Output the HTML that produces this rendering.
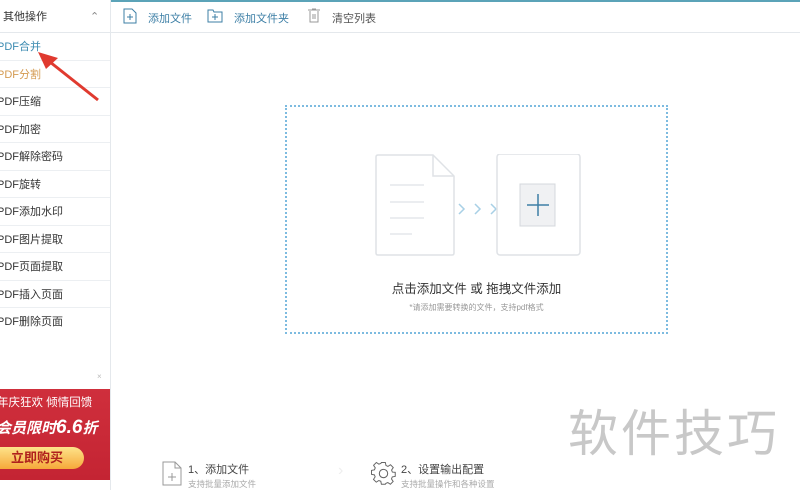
<!DOCTYPE html>
<html><head><meta charset="utf-8"><style>
*{margin:0;padding:0;box-sizing:border-box}
body{width:800px;height:490px;overflow:hidden;background:#fff;font-family:"Liberation Sans","Noto Sans CJK SC",sans-serif;position:relative;color:#333}
.side{position:absolute;left:0;top:0;width:111px;height:490px;border-right:1px solid #e4e8ec;background:#fff}
.hd{height:33px;border-bottom:1px solid #e4e8ec;font-size:11px;line-height:35px;padding-left:0;color:#333}
.item{height:27.5px;border-bottom:1px solid #eceff2;font-size:11px;line-height:29px;color:#333;margin-left:-3px}
.top{position:absolute;left:111px;top:0;right:0;height:33px;border-bottom:1px solid #e4e8ec;font-size:11px;color:#3d7fa6}
.top span{position:absolute;top:10px}
.box{position:absolute;left:285px;top:105px;width:383px;height:229px;border:2px dotted #7dbbe0}
</style></head><body>
<div style="position:absolute;left:0;top:0;width:800px;height:2px;background:#5ba3b8"></div>
<div class="side">
<div class="hd">&nbsp;其他操作<span style="position:absolute;left:90px;top:0;color:#888">⌃</span></div>
<div class="item" style="color:#3a8ab0">PDF合并</div>
<div class="item" style="color:#d49a50">PDF分割</div>
<div class="item">PDF压缩</div>
<div class="item">PDF加密</div>
<div class="item">PDF解除密码</div>
<div class="item">PDF旋转</div>
<div class="item">PDF添加水印</div>
<div class="item">PDF图片提取</div>
<div class="item">PDF页面提取</div>
<div class="item">PDF插入页面</div>
<div class="item" style="border-bottom:none">PDF删除页面</div>
<div style="position:absolute;left:97px;top:372px;font-size:8px;color:#bbb">×</div>
<div style="position:absolute;left:0;top:389px;width:110px;height:91px;background:linear-gradient(#cf2f3c,#c42433)">
<div style="position:absolute;left:-3px;top:5px;color:#fff;font-size:11.5px;white-space:nowrap">年庆狂欢 倾情回馈</div>
<div style="position:absolute;left:-4px;top:28px;color:#fff;font-size:15px;font-weight:bold;font-style:italic;white-space:nowrap">会员限时<span style="font-size:19px">6.6</span>折</div>
<div style="position:absolute;left:-10px;top:58px;width:94px;height:22px;border-radius:11px;background:linear-gradient(#fde38a,#f6a83a);color:#b0211d;font-weight:bold;font-size:13px;text-align:center;line-height:22px">立即购买</div>
</div>
</div>
<div class="top">
<svg style="position:absolute;left:12px;top:8px" width="14" height="16"><path d="M1 1h8l4 4v10H1z" fill="none" stroke="#3d7fa6"/><path d="M7 6v6M4 9h6" stroke="#3d7fa6"/></svg>
<span style="left:37px">添加文件</span>
<svg style="position:absolute;left:96px;top:9px" width="16" height="14"><path d="M1 1h5l1 2h8v10H1z" fill="none" stroke="#3d7fa6"/><path d="M8 5v6M5 8h6" stroke="#3d7fa6"/></svg>
<span style="left:123px">添加文件夹</span>
<svg style="position:absolute;left:197px;top:8px" width="12" height="15"><path d="M0 2h12M4 1h4M2 3v11h8V3" fill="none" stroke="#999"/><path d="M5 6v5M7 6v5" stroke="#999"/></svg>
<span style="left:221px;color:#555">清空列表</span>
</div>
<svg style="position:absolute;left:0;top:48px" width="110" height="56"><path d="M98 52L50 14" stroke="#e03a2f" stroke-width="3"/><path d="M38 4L58 10L46 21z" fill="#e03a2f"/></svg>
<div class="box"></div>
<svg style="position:absolute;left:374px;top:154px" width="210" height="104">
<path d="M2 3q0-2 2-2h55l21 21v77q0 2-2 2H4q-2 0-2-2z" fill="none" stroke="#dfe2e6" stroke-width="1.5"/>
<path d="M59 1v21h21" fill="none" stroke="#dfe2e6" stroke-width="1.5"/>
<path d="M16 31h34M16 48h34M16 64h34M16 80h22" stroke="#dfe2e6" stroke-width="1.3"/>
<path d="M85 50l5 5-5 5M101 50l5 5-5 5M117 50l5 5-5 5" fill="none" stroke="#a8d0e6" stroke-width="1.5"/>
<rect x="123" y="0" width="83" height="101" rx="3" fill="none" stroke="#dfe2e6" stroke-width="1.5"/>
<rect x="146" y="30" width="35" height="42" fill="#f0f1f3" stroke="#d5d8dc"/>
<path d="M164 40v22M153 51h22" stroke="#3d7fa6" stroke-width="1.5"/>
</svg>
<div style="position:absolute;left:285px;top:278px;width:383px;text-align:center;font-size:12.5px;color:#333">点击添加文件 或 拖拽文件添加</div>
<div style="position:absolute;left:285px;top:302px;width:383px;text-align:center;font-size:8px;color:#999">*请添加需要转换的文件，支持pdf格式</div>
<div style="position:absolute;left:568px;top:394px;font-size:50px;color:#c8c8c8;letter-spacing:3px;white-space:nowrap">软件技巧</div>
<svg style="position:absolute;left:162px;top:461px" width="20" height="25"><path d="M1 1h12l6 6v17H1z" fill="none" stroke="#999"/><path d="M13 1v6h6M10 12v8M6 16h8" fill="none" stroke="#999"/></svg>
<div style="position:absolute;left:188px;top:461px;font-size:11px;color:#444">1、添加文件</div>
<div style="position:absolute;left:188px;top:478px;font-size:8.5px;color:#aaa">支持批量添加文件</div>
<div style="position:absolute;left:338px;top:462px;font-size:16px;color:#eee">›</div>
<svg style="position:absolute;left:371px;top:461px" width="25" height="25" viewBox="0 0 24 24"><path d="M10 2h4l.6 3 2 1 2.6-1.7 2.8 2.8L20.3 9.7l.8 2 2.9.3v4l-3 .6-.8 2 1.7 2.6-2.8 2.8-2.6-1.7-2 .8L14 24h-4l-.6-3-2-.8-2.6 1.7-2.8-2.8 1.7-2.6-.8-2L0 14v-4l3-.6.8-2L2.1 4.8 4.9 2l2.6 1.7 2-.8z" fill="none" stroke="#666" transform="scale(.95) translate(.5 -.5)"/><circle cx="12" cy="12" r="4" fill="none" stroke="#666"/></svg>
<div style="position:absolute;left:401px;top:461px;font-size:11px;color:#444">2、设置输出配置</div>
<div style="position:absolute;left:401px;top:478px;font-size:8.5px;color:#aaa">支持批量操作和各种设置</div>
</body></html>
